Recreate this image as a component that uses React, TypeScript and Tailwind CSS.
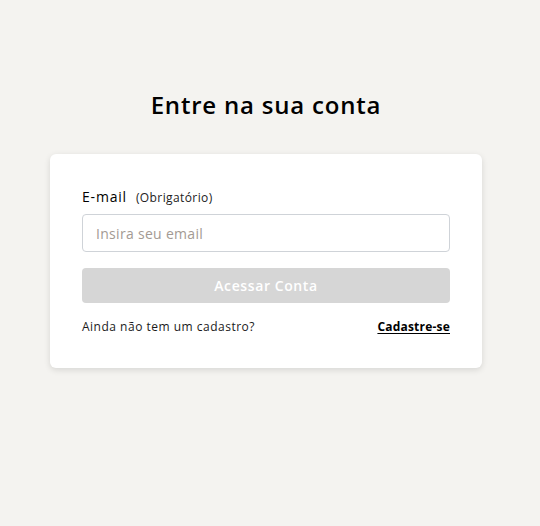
export default function App() {
  return (
    <div className="min-h-[526px] w-full bg-[#f4f3f0] flex flex-col items-center pt-[90px] pr-[8px] font-['Open_Sans',sans-serif] text-black">
      <h1 className="text-[24px] leading-[30px] font-semibold tracking-[0.8px]">Entre na sua conta</h1>

      <div className="mt-[34px] w-[432px] bg-white rounded-[6px] shadow-[0_2px_6px_rgba(0,0,0,0.12)] px-[32px] pt-[33px] pb-[32px]">
        <div className="flex items-baseline gap-[9px]">
          <span className="text-[14px] font-medium leading-[20px] tracking-[0.8px]">E-mail</span>
          <span className="text-[12px] leading-[20px] text-[#222] tracking-[0.4px]">(Obrigatório)</span>
        </div>

        <input
          type="email"
          placeholder="Insira seu email"
          className="mt-[6px] w-full h-[38px] rounded-[4px] border border-[#cfd3d8] px-[13px] text-[14px] tracking-[0.3px] placeholder:text-[#a39a93] outline-none"
        />

        <button
          disabled
          className="mt-[16px] w-full h-[35px] rounded-[4px] bg-[#d6d6d6] text-white text-[14px] font-semibold tracking-[0.6px]"
        >
          Acessar Conta
        </button>

        <div className="mt-[15px] flex items-center justify-between text-[12px] leading-[18px] tracking-[0.5px]">
          <span className="text-[#1a1a1a]">Ainda não tem um cadastro?</span>
          <a href="#" className="font-bold underline underline-offset-2 tracking-[0.2px]">Cadastre-se</a>
        </div>
      </div>
    </div>
  )
}
